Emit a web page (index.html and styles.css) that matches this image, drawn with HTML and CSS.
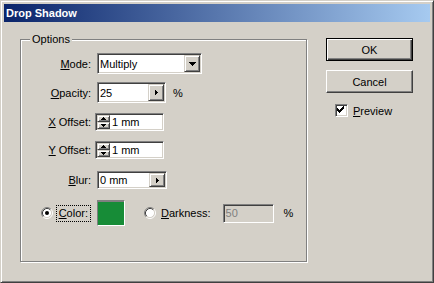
FILE: index.html
```html
<!DOCTYPE html>
<html>
<head>
<meta charset="utf-8">
<link rel="stylesheet" href="styles.css">
</head>
<body>
<div class="window">
  <div class="titlebar">Drop Shadow</div>
  <div class="content">
    <div class="group">
      <span class="legend">Options</span>
      <div class="form">
        <label class="lbl h21"><span><u>M</u>ode:</span></label>
        <div class="combo sunken">
          <span class="val">Multiply</span>
          <span class="drop raised"><svg width="7" height="4" shape-rendering="crispEdges"><rect x="0" y="0" width="7" height="1"/><rect x="1" y="1" width="5" height="1"/><rect x="2" y="2" width="3" height="1"/><rect x="3" y="3" width="1" height="1"/></svg></span>
        </div>

        <label class="lbl h21"><span><u>O</u>pacity:</span></label>
        <div class="ctl">
          <div class="field sunken opacity">
            <span class="val">25</span>
            <span class="arr raised"><svg width="3" height="5" shape-rendering="crispEdges"><rect x="0" y="0" width="1" height="5"/><rect x="1" y="1" width="1" height="3"/><rect x="2" y="2" width="1" height="1"/></svg></span>
          </div>
          <span class="unit">%</span>
        </div>

        <label class="lbl h18"><span><u>X</u> Offset:</span></label>
        <div class="field sunken spin">
          <span class="spinbtns">
            <span class="sb raised"><svg width="5" height="3" shape-rendering="crispEdges"><rect x="2" y="0" width="1" height="1"/><rect x="1" y="1" width="3" height="1"/><rect x="0" y="2" width="5" height="1"/></svg></span>
            <span class="sb raised"><svg width="5" height="3" shape-rendering="crispEdges"><rect x="0" y="0" width="5" height="1"/><rect x="1" y="1" width="3" height="1"/><rect x="2" y="2" width="1" height="1"/></svg></span>
          </span>
          <span class="val">1 mm</span>
        </div>

        <label class="lbl h18"><span><u>Y</u> Offset:</span></label>
        <div class="field sunken spin">
          <span class="spinbtns">
            <span class="sb raised"><svg width="5" height="3" shape-rendering="crispEdges"><rect x="2" y="0" width="1" height="1"/><rect x="1" y="1" width="3" height="1"/><rect x="0" y="2" width="5" height="1"/></svg></span>
            <span class="sb raised"><svg width="5" height="3" shape-rendering="crispEdges"><rect x="0" y="0" width="5" height="1"/><rect x="1" y="1" width="3" height="1"/><rect x="2" y="2" width="1" height="1"/></svg></span>
          </span>
          <span class="val">1 mm</span>
        </div>

        <label class="lbl h18"><span><u>B</u>lur:</span></label>
        <div class="field sunken blur">
          <span class="val">0 mm</span>
          <span class="arr raised"><svg width="3" height="5" shape-rendering="crispEdges"><rect x="0" y="0" width="1" height="5"/><rect x="1" y="1" width="1" height="3"/><rect x="2" y="2" width="1" height="1"/></svg></span>
        </div>

        <div class="lbl h26 colorcell">
          <svg class="radio" width="12" height="12" viewBox="0 0 12 12"><circle cx="6" cy="6" r="4.5" fill="#fff"/><path d="M2.11 9.89A5.5 5.5 0 0 1 9.89 2.11" fill="none" stroke="#808080"/><path d="M9.89 2.11A5.5 5.5 0 0 1 2.11 9.89" fill="none" stroke="#fff"/><path d="M2.82 9.18A4.5 4.5 0 0 1 9.18 2.82" fill="none" stroke="#404040"/><path d="M9.18 2.82A4.5 4.5 0 0 1 2.82 9.18" fill="none" stroke="#d4d0c8"/><circle cx="6" cy="6" r="2"/></svg>
          <label class="focus"><u>C</u>olor:</label>
        </div>
        <div class="ctl colorctl">
          <span class="swatch"></span>
          <svg class="radio dk" width="12" height="12" viewBox="0 0 12 12"><circle cx="6" cy="6" r="4.5" fill="#fff"/><path d="M2.11 9.89A5.5 5.5 0 0 1 9.89 2.11" fill="none" stroke="#808080"/><path d="M9.89 2.11A5.5 5.5 0 0 1 2.11 9.89" fill="none" stroke="#fff"/><path d="M2.82 9.18A4.5 4.5 0 0 1 9.18 2.82" fill="none" stroke="#404040"/><path d="M9.18 2.82A4.5 4.5 0 0 1 2.82 9.18" fill="none" stroke="#d4d0c8"/></svg>
          <label class="dklbl"><u>D</u>arkness:</label>
          <div class="field sunken disabled"><span class="val">50</span></div>
          <span class="unit2">%</span>
        </div>
      </div>
    </div>
    <div class="side">
      <button class="btn ok">OK</button>
      <button class="btn cancel">Cancel</button>
      <label class="check">
        <span class="cbox sunken"><svg width="7" height="7" shape-rendering="crispEdges"><rect x="6" y="0" width="1" height="1"/><rect x="5" y="1" width="2" height="1"/><rect x="0" y="2" width="1" height="1"/><rect x="4" y="2" width="3" height="1"/><rect x="0" y="3" width="2" height="1"/><rect x="3" y="3" width="3" height="1"/><rect x="0" y="4" width="5" height="1"/><rect x="1" y="5" width="3" height="1"/><rect x="2" y="6" width="1" height="1"/></svg></span>
        <span><u>P</u>review</span>
      </label>
    </div>
  </div>
</div>
</body>
</html>
```

FILE: styles.css
```css
* { box-sizing: border-box; margin: 0; padding: 0; }
html, body { width: 434px; height: 283px; overflow: hidden; }
body {
  background: #d4d0c8;
  font: 11px "Liberation Sans", Arial, sans-serif;
  color: #000;
}
u { text-decoration: underline; text-underline-offset: 1px; }

.window {
  width: 434px;
  height: 283px;
  border: 1px solid;
  border-color: #d4d0c8 #404040 #404040 #d4d0c8;
  box-shadow: inset 1px 1px 0 #fff, inset -1px -1px 0 #808080;
  padding: 3px;
  display: flex;
  flex-direction: column;
}
.titlebar {
  height: 18px;
  line-height: 18px;
  padding-left: 2px;
  background: linear-gradient(to right, #0a246a, #a6caf0);
  color: #fff;
  font-weight: bold;
}
.content {
  display: flex;
  align-items: flex-start;
  padding: 16px 0 0 16px;
}

.sunken {
  border: 1px solid;
  border-color: #808080 #fff #fff #808080;
  box-shadow: inset 1px 1px 0 #404040, inset -1px -1px 0 #d4d0c8;
  padding: 1px;
  background: #fff;
}
.raised {
  border: 1px solid;
  border-color: #d4d0c8 #404040 #404040 #d4d0c8;
  box-shadow: inset 1px 1px 0 #fff, inset -1px -1px 0 #808080;
  background: #d4d0c8;
  display: flex;
  align-items: center;
  justify-content: center;
}

.group {
  position: relative;
  width: 287px;
  height: 223px;
  margin-top: 1px;
  border: 1px solid #808080;
  box-shadow: inset 1px 1px 0 #fff, 1px 1px 0 #fff;
  padding-top: 13px;
}
.legend {
  position: absolute;
  left: 9px;
  top: -7px;
  padding: 0 2px;
  line-height: 13px;
  background: #d4d0c8;
}
.form {
  display: grid;
  grid-template-columns: 71px auto;
  grid-template-rows: 29px 31px 28px 30px 29px 26px;
  column-gap: 5px;
  align-items: start;
}
.lbl {
  display: flex;
  align-items: center;
  justify-content: flex-end;
  padding-right: 1px;
  white-space: pre;
}
.h21 { height: 21px; }
.h18 { height: 18px; }
.h26 { height: 26px; }

.ctl { display: flex; align-items: center; }
.val { flex: 1; line-height: 14px; padding-left: 1px; white-space: nowrap; }

.combo {
  width: 105px;
  height: 21px;
  display: flex;
  align-items: center;
}
.drop { width: 16px; height: 17px; }

.field { display: flex; align-items: center; }
.opacity { width: 69px; height: 21px; }
.opacity .arr { width: 16px; height: 17px; }
.unit { margin-left: 7px; }

.spin { width: 69px; height: 18px; margin-left: -2px; }
.spinbtns { display: flex; flex-direction: column; width: 13px; height: 14px; }
.sb { flex: 1; }
.spin .val { padding-left: 2px; }

.blur { width: 70px; height: 18px; }
.blur .arr { width: 16px; height: 14px; }

.colorcell { gap: 4px; padding-right: 2px; }
.focus {
  outline: 1px dotted #000;
  outline-offset: 0;
  padding: 1px 2px;
  line-height: 13px;
}
.colorctl { height: 26px; }
.swatch {
  width: 28px;
  height: 26px;
  background: #178c37;
  border: 1px solid;
  border-color: #808080 #fff #fff #808080;
  box-shadow: inset 0 1px 0 #808080;
}
.dk { margin-left: 19px; }
.dklbl { margin-left: 5px; }
.disabled {
  background: #d4d0c8;
  color: #808080;
  width: 51px;
  height: 19px;
  margin-left: 12px;
}
.unit2 { margin-left: 10px; }

.side {
  margin-left: 19px;
  width: 87px;
  display: flex;
  flex-direction: column;
}
.btn {
  font: inherit;
  color: #000;
  height: 23px;
  background: #d4d0c8;
  border: 1px solid;
  border-color: #fff #404040 #404040 #fff;
  box-shadow: inset -1px -1px 0 #808080;
}
.ok {
  border-color: #000;
  box-shadow: inset 1px 1px 0 #fff, inset -1px -1px 0 #404040, inset -2px -2px 0 #808080;
}
.cancel { margin-top: 9px; }
.check {
  display: flex;
  align-items: center;
  gap: 5px;
  margin-top: 11px;
  padding-left: 9px;
}
.cbox { width: 13px; height: 13px; }
.cbox svg { display: block; }
```
